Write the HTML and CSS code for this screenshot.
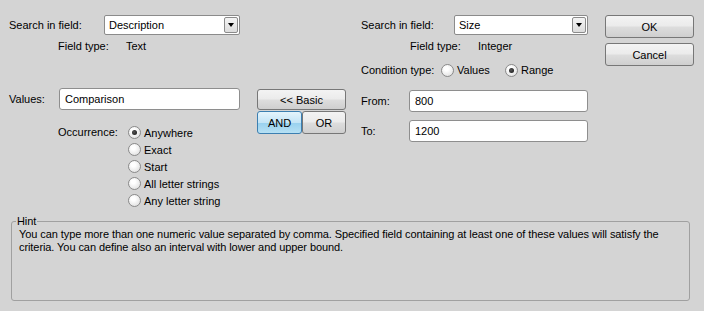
FILE: index.html
```html
<!DOCTYPE html>
<html>

<head>
	<title>Search condition</title>
	<link rel="stylesheet" href="styles.css">
</head>

<body>
	<div class="top">
		<!-- left side: text field condition -->
		<div class="left">
			<div class="row first">
				<span class="label w95">Search in field:</span>
				<div class="combo w136"><span>Description</span><span class="drop"></span></div>
			</div>
			<div class="row info">
				<span class="label w68">Field type:</span>
				<span>Text</span>
			</div>
			<div class="row values">
				<span class="label w50">Values:</span>
				<input class="text w181" type="text" value="Comparison">
			</div>
			<div class="occurrence">
				<span class="label w70">Occurrence:</span>
				<div class="radios">
					<label class="radio"><input type="radio" name="occ" checked> Anywhere</label>
					<label class="radio"><input type="radio" name="occ"> Exact</label>
					<label class="radio"><input type="radio" name="occ"> Start</label>
					<label class="radio"><input type="radio" name="occ"> All letter strings</label>
					<label class="radio"><input type="radio" name="occ"> Any letter string</label>
				</div>
			</div>
		</div>

		<!-- middle buttons -->
		<div class="mid">
			<button class="btn basic">&lt;&lt; Basic</button>
			<div class="pair">
				<button class="btn and">AND</button>
				<button class="btn or">OR</button>
			</div>
		</div>

		<!-- right side: numeric field condition -->
		<div class="right">
			<div class="row first">
				<span class="label w93">Search in field:</span>
				<div class="combo w134"><span>Size</span><span class="drop"></span></div>
			</div>
			<div class="row info">
				<span class="label w68">Field type:</span>
				<span>Integer</span>
			</div>
			<div class="row cond">
				<span class="label w80">Condition type:</span>
				<label class="radio w64"><input type="radio" name="cond"> Values</label>
				<label class="radio"><input type="radio" name="cond" checked> Range</label>
			</div>
			<div class="row from">
				<span class="label w48">From:</span>
				<input class="text w179" type="text" value="800">
			</div>
			<div class="row to">
				<span class="label w48">To:</span>
				<input class="text w179" type="text" value="1200">
			</div>
		</div>

		<!-- OK / Cancel -->
		<div class="actions">
			<button class="btn act">OK</button>
			<button class="btn act cancel">Cancel</button>
		</div>
	</div>

	<fieldset class="hint">
		<legend>Hint</legend>
		<p>You can type more than one numeric value separated by comma. Specified field containing at least one of these values will satisfy the criteria. You can define also an interval with lower and upper bound.</p>
	</fieldset>
</body>

</html>
```

FILE: styles.css
```css
body {
	margin: 0;
	background-color: #d4d4d4;
	font-family: "Liberation Sans", Arial, sans-serif;
	font-size: 11px;
	color: #000;
	height: 311px;
	overflow: hidden;
}

.top {
	display: flex;
	height: 215px;
}

.left {
	width: 241px;
	padding-left: 9px;
}

.mid {
	width: 89px;
	margin-left: 7px;
	padding-top: 89px;
}

.right {
	width: 227px;
	margin-left: 15px;
}

.actions {
	width: 89px;
	margin-left: 17px;
	padding-top: 15px;
}

.row {
	display: flex;
	align-items: center;
}

.label {
	flex: none;
}

.w48 { width: 48px; }
.w50 { width: 50px; }
.w64 { width: 64px; }
.w68 { width: 68px; }
.w70 { width: 70px; }
.w80 { width: 80px; }
.w93 { width: 93px; }
.w95 { width: 95px; }
.w134 { width: 134px; }
.w136 { width: 136px; }
.w179 { width: 179px; }
.w181 { width: 181px; }

.first {
	margin-top: 15px;
	height: 20px;
}

.info {
	margin-top: 4px;
	height: 14px;
	padding-left: 49px;
}

.values {
	margin-top: 35px;
}

/* combo box */
.combo {
	box-sizing: border-box;
	height: 20px;
	background: #fff;
	border: 1px solid #8b8b8b;
	border-radius: 2px;
	display: flex;
	align-items: center;
	justify-content: space-between;
	padding-left: 4px;
	padding-right: 1px;
}

.drop {
	box-sizing: border-box;
	width: 14px;
	height: 16px;
	border: 1px solid #8b8b8b;
	border-radius: 2px;
	background: linear-gradient(#f4f4f4, #dcdcdc);
	display: flex;
	align-items: center;
	justify-content: center;
}

.drop::after {
	content: "";
	border-left: 3.5px solid transparent;
	border-right: 3.5px solid transparent;
	border-top: 4px solid #000;
}

/* text inputs */
.text {
	box-sizing: border-box;
	height: 22px;
	margin: 0;
	padding: 0 5px;
	background: #fff;
	border: 1px solid #8e8e8e;
	border-radius: 3px;
	font: inherit;
	color: #000;
}

/* radio buttons */
.radio {
	display: flex;
	align-items: center;
	height: 17px;
	white-space: nowrap;
}

.radio input {
	appearance: none;
	-webkit-appearance: none;
	box-sizing: border-box;
	width: 13px;
	height: 13px;
	margin: 0 3px 0 0;
	border: 1px solid #8a8a8a;
	border-radius: 50%;
	background: radial-gradient(circle at 40% 35%, #ffffff 20%, #e4e4e4 75%);
	display: flex;
	align-items: center;
	justify-content: center;
}

.radio input:checked::after {
	content: "";
	width: 5px;
	height: 5px;
	border-radius: 50%;
	background: radial-gradient(circle at 40% 40%, #555, #111);
}

.occurrence {
	display: flex;
	margin-top: 14px;
	padding-left: 49px;
}

.occurrence .label {
	line-height: 17px;
}

.cond {
	margin-top: 10px;
	height: 14px;
}

.from {
	margin-top: 13px;
}

.to {
	margin-top: 8px;
}

/* buttons */
.btn {
	box-sizing: border-box;
	margin: 0;
	padding: 0;
	font: inherit;
	color: #000;
	border: 1px solid #777;
	border-radius: 3px;
	background: linear-gradient(#f3f3f3 0%, #ebebeb 48%, #dddddd 52%, #cfcfcf 100%);
}

.basic {
	width: 89px;
	height: 21px;
	display: block;
}

.pair {
	display: flex;
	margin-top: 1px;
}

.and {
	width: 45px;
	height: 23px;
	border-color: #3c7fb1;
	background: linear-gradient(#e5f4fc 0%, #c4e5f6 50%, #98d1ef 51%, #b6e0f4 100%);
}

.or {
	width: 44px;
	height: 23px;
}

.act {
	display: block;
	width: 89px;
	height: 23px;
}

.cancel {
	margin-top: 5px;
}

/* hint box */
.hint {
	margin: 0 14px 0 11px;
	padding: 0 7px;
	height: 84px;
	border: 1px solid #a0a0a0;
	border-radius: 3px;
	letter-spacing: -0.08px;
}

.hint legend {
	padding: 0 1px;
	margin-left: -3px;
	line-height: 13px;
}

.hint p {
	margin: 0;
	line-height: 13px;
}
```
